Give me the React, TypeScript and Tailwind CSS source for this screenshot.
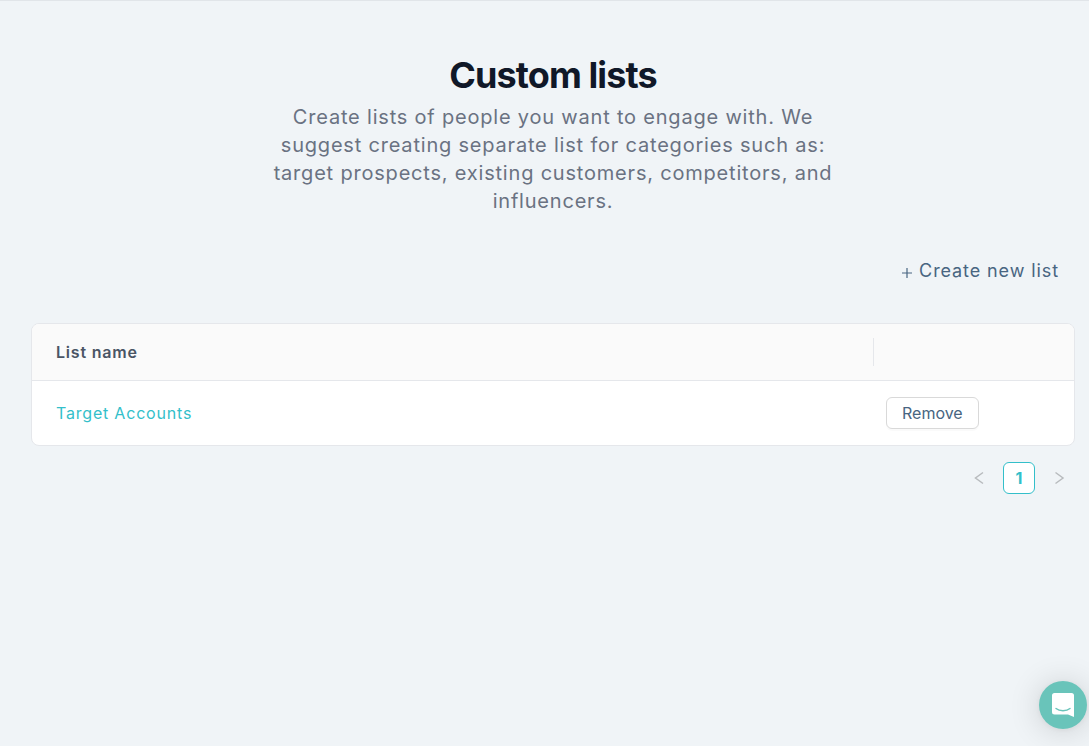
import React from "react";

type List = { id: number; name: string };

const lists: List[] = [{ id: 1, name: "Target Accounts" }];

function Chevron({ direction }: { direction: "left" | "right" }) {
  return (
    <svg
      width="16"
      height="16"
      viewBox="0 0 16 16"
      fill="none"
      stroke="currentColor"
      strokeWidth="1.5"
      aria-hidden="true"
    >
      {direction === "left" ? <path d="M12 2.500 4.500 8 12 13.500" /> : <path d="M4.500 2.500 12 8 4.500 13.500" />}
    </svg>
  );
}

function ListsTable() {
  return (
    <div className="overflow-hidden rounded-lg border border-gray-200 bg-white">
      <table className="w-full table-fixed border-separate border-spacing-0 text-left text-base">
        <colgroup>
          <col />
          <col className="w-50" />
        </colgroup>
        <thead>
          <tr className="h-[57px] bg-[#fafafa]">
            <th scope="col" className="border-b border-gray-200 px-6 font-semibold text-gray-600">
              List name
            </th>
            <td className="border-b border-gray-200">
              <div className="-ml-px h-7 border-l border-gray-200" />
            </td>
          </tr>
        </thead>
        <tbody>
          {lists.map((list) => (
            <tr key={list.id} className="h-16">
              <td className="px-6">
                <a href={`#list-${list.id}`} className="text-[#33bfca]">
                  {list.name}
                </a>
              </td>
              <td className="px-3">
                <button
                  type="button"
                  className="flex h-8 items-center rounded-md border border-[#d9d9d9] bg-white px-[15px] tracking-normal text-[#486581] shadow-[0_2px_0_rgba(0,0,0,0.02)]"
                >
                  Remove
                </button>
              </td>
            </tr>
          ))}
        </tbody>
      </table>
    </div>
  );
}

function Pagination() {
  return (
    <nav aria-label="Pagination" className="mt-4 flex justify-end gap-2 tracking-normal">
      <button type="button" disabled aria-label="Previous page" className="flex size-8 items-center justify-center text-[#b8bbbe]">
        <Chevron direction="left" />
      </button>
      <button
        type="button"
        aria-current="page"
        className="flex size-8 items-center justify-center rounded-md border border-[#33bfca] bg-white font-bold text-[#33bfca]"
      >
        1
      </button>
      <button type="button" disabled aria-label="Next page" className="flex size-8 items-center justify-center text-[#b8bbbe]">
        <Chevron direction="right" />
      </button>
    </nav>
  );
}

export default function App() {
  return (
    <div className="min-h-screen border-t border-[#e1e5e9] bg-[#f0f4f7] font-['Inter',sans-serif] tracking-wider">
      <main className="pt-[54px] pr-3.5 pl-[31px]">
        <header className="mx-auto max-w-xl text-center">
          <h1 className="text-4xl font-bold tracking-tight text-gray-900">Custom lists</h1>
          <p className="mt-2 text-xl text-gray-500">
            Create lists of people you want to engage with. We suggest creating separate list for categories such as:
            target prospects, existing customers, competitors, and influencers.
          </p>
        </header>

        <div className="mt-10 mb-9 flex justify-end pr-4">
          <button type="button" className="flex h-8 items-center gap-1.5 text-lg tracking-wider text-[#486581]">
            <svg width="12" height="12" viewBox="0 0 12 12" stroke="currentColor" className="mt-1" aria-hidden="true">
              <path d="M6 1v10M1 6h10" strokeWidth="1.200" />
            </svg>
            Create new list
          </button>
        </div>

        <ListsTable />
        <Pagination />
      </main>

      <button
        type="button"
        aria-label="Open chat"
        className="fixed right-0.5 bottom-[17px] flex size-12 items-center justify-center rounded-full bg-[#69c4ba] shadow-[0_1px_6px_rgba(0,0,0,0.06),0_2px_32px_rgba(0,0,0,0.16)]"
      >
        <svg width="22" height="24" viewBox="0 0 22 24" aria-hidden="true">
          <path d="M2.500 0h17A2.500 2.500 0 0 1 22 2.500V24l-6-2.500H2.500A2.500 2.500 0 0 1 0 19V2.500A2.500 2.500 0 0 1 2.500 0Z" fill="#fff" />
          <path d="M4 15.500c3.500 3 10.500 3 14 0" fill="none" stroke="#69c4ba" strokeWidth="1.400" strokeLinecap="round" />
        </svg>
      </button>
    </div>
  );
}
